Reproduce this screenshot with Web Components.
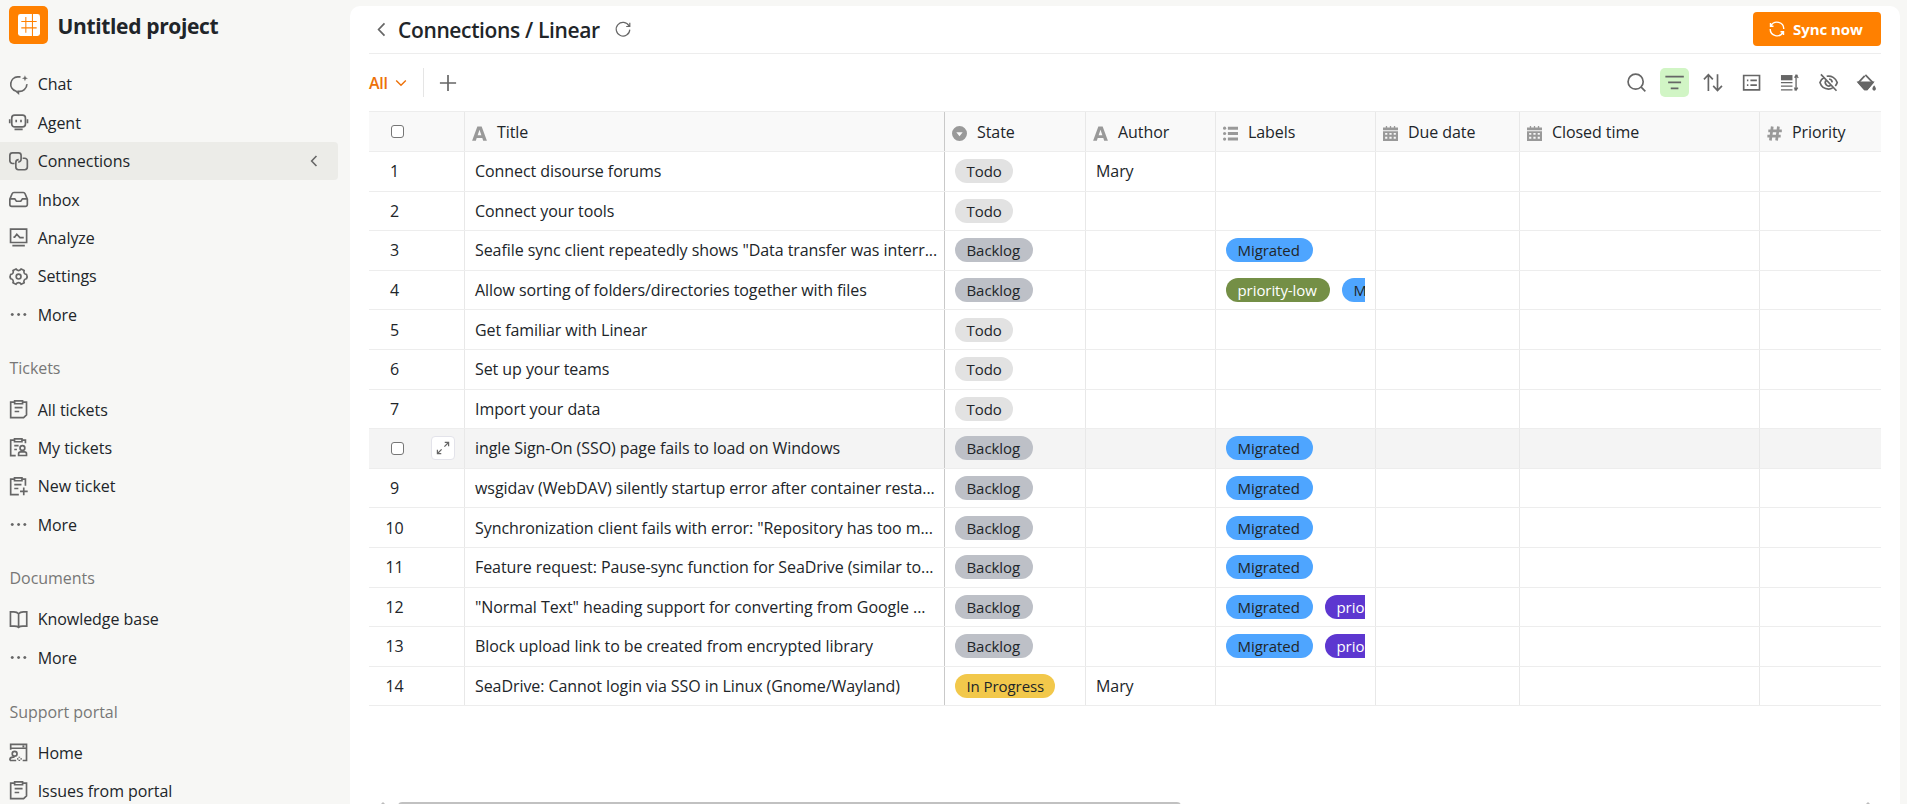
<!DOCTYPE html>
<html lang="en">
<head>
<meta charset="utf-8">
<title>Untitled project</title>
<style>
	html, body {
		margin: 0;
		height: 100%;
		overflow: hidden;
	}
	body {
		background: #f7f7f5;
		color: #212529;
		font: 16px/24px "Open Sans", "Noto Sans", sans-serif;
		letter-spacing: -0.07px;
	}
</style>
</head>
<body>
<project-app></project-app>

<script>
// Line icons are stroked, the ones in SOLID are filled
const ICONS = {
	chat: '<path d="M9.6 1.6H7.2A6 6 0 0 0 5.6 13.3L7.8 15.2V13.6A6 6 0 0 0 14.9 7.6"/><path d="M13.3.2 14 2 15.8 2.7 14 3.4 13.3 5.2 12.6 3.4 10.8 2.7 12.6 2Z" fill="currentColor" stroke="none"/>',
	agent: '<rect x="2.3" y="1.8" width="11.4" height="9.8" rx="2.4"/><path d="M.6 5.2v3.4M15.4 5.2v3.4M6 5.6v2.2M10 5.6v2.2M4.6 13.7h6.8"/>',
	connections: '<path d="M4.6 9.6H2.9A2.2 2.2 0 0 1 .7 7.4V3A2.2 2.2 0 0 1 2.9.8h5A2.2 2.2 0 0 1 10.1 3v2.9A2.4 2.4 0 0 1 7.7 8.4"/><path d="M11.4 5.2h1.7a2.2 2.2 0 0 1 2.2 2.2v5.2a2.2 2.2 0 0 1-2.2 2.2H7.9a2.2 2.2 0 0 1-2.2-2.2V8.7a2.4 2.4 0 0 1 2.4-2.4"/>',
	inbox: '<path d="M.7 7.6 2.6 3.1a1.6 1.6 0 0 1 1.5-1h7.8a1.6 1.6 0 0 1 1.5 1l1.9 4.5v4.5a1.6 1.6 0 0 1-1.6 1.6H2.3a1.6 1.6 0 0 1-1.6-1.6ZM.9 7.4h3.9l1.4 2h3.6l1.4-2h3.9"/>',
	analyze: '<path d="M1.3 1h13.4v11.1H1.3zM2.8 14.7h10.4M3.7 7.6h1l1.8-2.4 2.6 2.8h3.2"/>',
	settings: '<path d="M5.9 1.6a2.3 2.3 0 0 0 4.2 0l2.6 1.3a2.2 2.2 0 0 0 1.9 3.3q1 1.8 0 3.6a2.2 2.2 0 0 0-1.9 3.3l-2.6 1.3a2.3 2.3 0 0 0-4.2 0l-2.6-1.3a2.2 2.2 0 0 0-1.9-3.3q-1-1.8 0-3.6a2.2 2.2 0 0 0 1.9-3.3Z" stroke-linejoin="round"/><circle cx="8" cy="8" r="2"/>',
	more: '<g fill="currentColor" stroke="none"><circle cx="2.7" cy="8" r="1.25"/><circle cx="8" cy="8" r="1.25"/><circle cx="13.2" cy="8" r="1.25"/></g>',
	ticket: '<path d="M4.6 1.8H1.4v12.9h10.8l2.4-2.2V1.8h-3.2M4.7.8h6.6v2.3H4.7zM4.7 6.4h6.6M4.7 9.6h3.8"/>',
	myticket: '<path d="M4.2 1.8H1.4v12.9h4.2M11 1.8h2.7v2.6M4.6.8h6.2v2.3H4.6zM4.4 6.4H8M4.4 9.6h2.2"/><circle cx="11.2" cy="8.3" r="2"/><path d="M8 14.6v-1.4c0-1 .9-1.6 1.8-1.6h3c.9 0 1.8.6 1.8 1.6v1.4Z"/>',
	newticket: '<path d="M4.2 1.8H1.4v12.9h6.8M11 1.8h2.7v5.6M4.6.8h6.2v2.3H4.6zM4.4 6.4h6M4.4 9.6h3.4M12.3 8.8v6.4M9.2 12h6.4"/>',
	book: '<path d="M8 3.2C7 1.9 5.6 1.5 4 1.5H1.2v12H4.4c1.5 0 2.8.2 3.6 1 .8-.8 2.1-1 3.6-1h3.2v-12H12c-1.6 0-3 .4-4 1.7ZM8 3.2v11.3"/>',
	portal: '<path d="M1.4 5.6V1.2h13.2v13.4h-3.2M1.4 4.4h13.2M11.2 2.8h1.6"/><circle cx="4.7" cy="9" r="2"/><path d="M.8 14.6v-.8c0-1.2 1.3-2 2.6-2h1.2M6 14.6H.8M8.6 11.4v1M8.6 14v1M6.8 13.2h1M9.6 13.2h1"/>',
	left: '<path d="M10.8 2.3 5.3 8l5.5 5.7"/>',
	down: '<path d="M2.5 5.2 8 10.6l5.5-5.4"/>',
	plus: '<path d="M8 .8v14.4M.8 8h14.4"/>',
	refresh: '<path d="M14 5A6.8 6.8 0 1 0 14.8 8.6M14.8 1.8v3.7h-3.6"/>',
	sync: '<path d="M2 4.8A6.8 6.8 0 0 1 14.8 8M14 11.2A6.8 6.8 0 0 1 1.2 8M1.5 2v3.2h3M14.5 14v-3.2h-3"/>',
	search: '<circle cx="7.2" cy="7.2" r="6.3"/><path d="m11.8 11.8 3.5 3.5"/>',
	filter: '<path d="M.3 3h15.4M2.6 7.8h10.8M4.8 12.8h6.4"/>',
	sort: '<path d="M4.5 15V1.6M.8 5.3l3.7-3.9 3.7 3.9M12.1 1v13.4M8.5 10.7l3.6 3.9 3.7-3.9"/>',
	group: '<path d="M1.4 2.1h13.2v12H1.4zM4.1 6.1h1.2M7 6.1h5.4M4.1 10.1h1.2M7 10.1h5.4"/>',
	rowheight: '<path d="M.8 1.7h9.6v4.4H.8z" fill="currentColor" stroke="none"/><path d="M.8 8h9.6M.8 11h9.6M.8 14h9.6M13.4 2v12M12 14h1.4M13.4 2h1.4M12.2 4 13.4 1.8 15.2 4M12 12.2l1.4 2 1.4-2" stroke-width="1.1"/>',
	hide: '<path d="M4.2 3.8C2.5 4.8 1.3 6.3.8 8c1 3.2 3.9 5.4 7.2 5.4 1.2 0 2.3-.3 3.3-.8M6.4 2.7A7.6 7.6 0 0 1 15.2 8c-.3 1-.9 2-1.6 2.8M5.6 6.4a3 3 0 0 0 4 4.1M8.4 5a3 3 0 0 1 2.6 2.8M1.6 1.2l13 13.6"/>',
	paint: '<path d="M6.4 2.4 1.2 8l5.2 5.6h1.9L13.2 8 7 1.6"/><path d="M1.2 7.8h12L8.3 13.6H6.4Z" fill="currentColor"/><path d="M14.3 10.2s1.5 2 1.5 3a1.5 1.5 0 0 1-3 0c0-1 1.5-3 1.5-3Z" fill="currentColor" stroke="none"/>',
	expand: '<path d="M9.6 6.4 14 2M10 1.6h4.4V6M6.4 9.6 2 14M1.6 10v4.4H6"/>',
	logo: '<rect width="16" height="16" rx="1.8" fill="#fff" stroke="none"/><path d="M5.7 2.2v11.4M10.5 0v16M2.4 5.5h11.2M2.4 10.1h11.2" stroke="#ff8000" stroke-width=".75"/>'
};

const SOLID = {
	text: '<path fill-rule="evenodd" d="M5.7.6h4.6l5.6 15h-4l-.9-2.7H5l-.9 2.7H.1ZM6 9.8h4L8 4Z"/>',
	select: '<path fill-rule="evenodd" d="M8 0a8 8 0 1 1 0 16A8 8 0 0 1 8 0ZM4.6 6.6 8 11l3.4-4.4Z"/>',
	list: '<circle cx="1.7" cy="2.3" r="1.7"/><circle cx="1.7" cy="8" r="1.7"/><circle cx="1.7" cy="13.9" r="1.7"/><path d="M5.2.7H16v3.3H5.2zM5.2 6.4H16v3.3H5.2zM5.2 12.2H16v3.3H5.2z"/>',
	date: '<path d="M3 0h1.4v1.5h2.9V0h1.4v1.5h2.9V0H13v1.5h3v3H0v-3h3z"/><path fill-rule="evenodd" d="M0 5.6h16V16H0ZM2.3 7.5v1.8h2.3V7.5ZM6.8 7.5v1.8h2.4V7.5ZM11.4 7.5v1.8h2.3V7.5ZM2.3 11.4v2.2h2.3v-2.2ZM6.8 11.4v2.2h2.4v-2.2ZM11.4 11.4v2.2h2.3v-2.2Z"/>',
	number: '<path d="M5.6.5 3.6 15.5M12.2.5l-2 15M1.4 5.2h14.4M.4 10.9h14.2" fill="none" stroke="currentColor" stroke-width="2.9"/>'
};

class UiIcon extends HTMLElement {
	connectedCallback() {
		const name = this.getAttribute('name');
		const size = this.getAttribute('size') || 19.2;
		const weight = this.getAttribute('weight') || 1.4;
		const paint = SOLID[name]
			? 'fill="currentColor"'
			: `fill="none" stroke="currentColor" stroke-width="${weight}"`;
		this.attachShadow({ mode: 'open' }).innerHTML = `
			<style>
			:host { display: block; flex: none; width: ${size}px; height: ${size}px; }
			svg { display: block; overflow: visible; }
			</style>
			<svg width="${size}" height="${size}" viewBox="0 0 16 16" ${paint}>${SOLID[name] || ICONS[name]}</svg>
		`;
	}
}
customElements.define('ui-icon', UiIcon);

class NavItem extends HTMLElement {
	connectedCallback() {
		this.attachShadow({ mode: 'open' }).innerHTML = `
			<style>
			:host {
				display: flex;
				align-items: center;
				box-sizing: border-box;
				width: 338px;
				height: 38.4px;
				padding: 0 17px 0 9px;
				border-radius: 0 4px 4px 0;
			}
			:host([active]) { background: #ecece8; }
			ui-icon { color: #666; }
			span { flex: 1; margin-left: 9.5px; white-space: nowrap; }
			</style>
			<ui-icon name="${this.getAttribute('icon')}"></ui-icon>
			<span><slot></slot></span>
			${this.hasAttribute('active') ? '<ui-icon name="left" size="14" weight="1.8"></ui-icon>' : ''}
		`;
	}
}
customElements.define('nav-item', NavItem);

class NavGroup extends HTMLElement {
	connectedCallback() {
		const label = this.getAttribute('label');
		this.attachShadow({ mode: 'open' }).innerHTML = `
			<style>
			:host { display: block; }
			h2 {
				box-sizing: border-box;
				height: 56.4px;
				margin: 0;
				padding: 22.5px 0 0 9.5px;
				color: #777;
				font: inherit;
			}
			</style>
			${label ? `<h2>${label}</h2>` : ''}
			<slot></slot>
		`;
	}
}
customElements.define('nav-group', NavGroup);

class SideBar extends HTMLElement {
	connectedCallback() {
		this.attachShadow({ mode: 'open' }).innerHTML = `
			<style>
			:host { display: block; width: 350px; flex: none; letter-spacing: -0.04px; }
			header { display: flex; height: 59.2px; padding: 6px 0 0 9px; }
			.logo {
				display: grid;
				place-items: center;
				width: 39px;
				height: 38px;
				border-radius: 5px;
				background: #ff8000;
			}
			h1 { margin: 0 0 0 9.5px; font-size: 21px; line-height: 41px; font-weight: 700; letter-spacing: -0.35px; }
			</style>
			<header>
				<div class="logo"><ui-icon name="logo" size="22"></ui-icon></div>
				<h1>Untitled project</h1>
			</header>
			<nav-group>
				<nav-item icon="chat">Chat</nav-item>
				<nav-item icon="agent">Agent</nav-item>
				<nav-item icon="connections" active>Connections</nav-item>
				<nav-item icon="inbox">Inbox</nav-item>
				<nav-item icon="analyze">Analyze</nav-item>
				<nav-item icon="settings">Settings</nav-item>
				<nav-item icon="more">More</nav-item>
			</nav-group>
			<nav-group label="Tickets">
				<nav-item icon="ticket">All tickets</nav-item>
				<nav-item icon="myticket">My tickets</nav-item>
				<nav-item icon="newticket">New ticket</nav-item>
				<nav-item icon="more">More</nav-item>
			</nav-group>
			<nav-group label="Documents">
				<nav-item icon="book">Knowledge base</nav-item>
				<nav-item icon="more">More</nav-item>
			</nav-group>
			<nav-group label="Support portal">
				<nav-item icon="portal">Home</nav-item>
				<nav-item icon="ticket">Issues from portal</nav-item>
			</nav-group>
		`;
	}
}
customElements.define('side-bar', SideBar);

// Background, text colour and width of each select option
const OPTIONS = {
	'Todo': ['#e2e2e2', '#212529', 58],
	'Backlog': ['#bdc0c7', '#212529', 78],
	'In Progress': ['#f2c84b', '#212529', 100],
	'Migrated': ['#4ea5ff', '#212529', 87],
	'priority-low': ['#748f46', '#fff', 104],
	'priority-high': ['#5d37d0', '#fff', 110]
};

class OptionTag extends HTMLElement {
	connectedCallback() {
		const [back, color, width] = OPTIONS[this.textContent];
		this.attachShadow({ mode: 'open' }).innerHTML = `
			<style>
			:host {
				flex: none;
				box-sizing: border-box;
				display: block;
				width: ${width}px;
				height: 24px;
				padding-left: 11.5px;
				border-radius: 12px;
				background: ${back};
				color: ${color};
				font-size: 15px;
				line-height: 24px;
				white-space: nowrap;
			}
			</style>
			<slot></slot>
		`;
	}
}
customElements.define('option-tag', OptionTag);

const COLUMNS = [
	['text', 'Title'],
	['select', 'State'],
	['text', 'Author'],
	['list', 'Labels'],
	['date', 'Due date'],
	['date', 'Closed time'],
	['number', 'Priority']
];

const ROWS = [
	['Connect disourse forums', 'Todo', 'Mary', []],
	['Connect your tools', 'Todo', '', []],
	['Seafile sync client repeatedly shows "Data transfer was interr...', 'Backlog', '', ['Migrated']],
	['Allow sorting of folders/directories together with files', 'Backlog', '', ['priority-low', 'Migrated']],
	['Get familiar with Linear', 'Todo', '', []],
	['Set up your teams', 'Todo', '', []],
	['Import your data', 'Todo', '', []],
	['ingle Sign-On (SSO) page fails to load on Windows', 'Backlog', '', ['Migrated']],
	['wsgidav (WebDAV) silently startup error after container resta...', 'Backlog', '', ['Migrated']],
	['Synchronization client fails with error: "Repository has too m...', 'Backlog', '', ['Migrated']],
	['Feature request: Pause-sync function for SeaDrive (similar to...', 'Backlog', '', ['Migrated']],
	['"Normal Text" heading support for converting from Google ...', 'Backlog', '', ['Migrated', 'priority-high']],
	['Block upload link to be created from encrypted library', 'Backlog', '', ['Migrated', 'priority-high']],
	['SeaDrive: Cannot login via SSO in Linux (Gnome/Wayland)', 'In Progress', 'Mary', []]
];
const HOVERED = 7;

class DataGrid extends HTMLElement {
	connectedCallback() {
		this.attachShadow({ mode: 'open' }).innerHTML = `
			<style>
			:host { display: block; }
			.row {
				display: grid;
				grid-template-columns: 96px 480px 141px 130px 160px 144px 240px 121px;
				box-sizing: border-box;
				height: 39.6px;
				border-bottom: 1px solid #ededed;
			}
			.row.head { height: 41px; background: #f9f9f9; border-top: 1px solid #ededed; }
			.row.hover { background: #f4f4f4; }
			.cell {
				display: flex;
				align-items: center;
				min-width: 0;
				overflow: hidden;
				border-right: 1px solid #e8e8e8;
				white-space: nowrap;
				padding: 0 10px;
			}
			.cell:nth-child(2) { border-right-color: #c9c9c9; }
			.cell:last-child { border-right: 0; }
			.head .cell { padding: 0 0 0 6.5px; gap: 10.5px; }
			.head ui-icon { color: #999; margin-top: 4px; }
			.row .cell.index { padding: 0 9px 0 22px; justify-content: space-between; }
			.num { width: 30px; margin-left: -11.5px; text-align: center; }
			.check {
				box-sizing: border-box;
				width: 13px;
				height: 13px;
				border: 1.4px solid #767676;
				border-radius: 3px;
				background: #fff;
			}
			.open {
				display: grid;
				place-items: center;
				box-sizing: border-box;
				width: 24px;
				height: 24px;
				border: 1px solid #e3e3ea;
				border-radius: 4px;
				background: #fff;
				color: #666;
			}
			.tags { display: flex; gap: 12px; overflow: hidden; }
			</style>
			<div class="row head">
				<div class="cell index"><i class="check"></i></div>
				${COLUMNS.map(([icon, name]) => `<div class="cell"><ui-icon name="${icon}" size="15"></ui-icon>${name}</div>`).join('')}
			</div>
			${ROWS.map((row, i) => this.renderRow(row, i)).join('')}
		`;
	}

	renderRow([title, state, author, labels], i) {
		const index = i === HOVERED
			? '<div class="cell index"><i class="check"></i><div class="open"><ui-icon name="expand" size="14"></ui-icon></div></div>'
			: `<div class="cell index"><span class="num">${i + 1}</span></div>`;
		return `
			<div class="row ${i === HOVERED ? 'hover' : ''}">
				${index}
				<div class="cell">${title}</div>
				<div class="cell"><option-tag>${state}</option-tag></div>
				<div class="cell">${author}</div>
				<div class="cell"><div class="tags">${labels.map(l => `<option-tag>${l}</option-tag>`).join('')}</div></div>
				<div class="cell"></div>
				<div class="cell"></div>
				<div class="cell"></div>
			</div>
		`;
	}
}
customElements.define('data-grid', DataGrid);

class ViewToolbar extends HTMLElement {
	connectedCallback() {
		const tools = ['search', 'filter', 'sort', 'group', 'rowheight', 'hide', 'paint'];
		this.attachShadow({ mode: 'open' }).innerHTML = `
			<style>
			:host { display: flex; align-items: center; height: 57px; color: #666; }
			.view { display: flex; align-items: center; gap: 6px; color: #ed7109; font-weight: 600; letter-spacing: -0.3px; }
			.line { width: 1px; height: 29px; margin: 0 15px; background: #e5e5e5; }
			.tools { display: flex; gap: 9.6px; margin-left: auto; }
			.tool {
				display: grid;
				place-items: center;
				width: 28.8px;
				height: 28.8px;
				border-radius: 5px;
			}
			.tool.filter { background: #d1f5c5; }
			</style>
			<div class="view">All<ui-icon name="down" size="14" weight="1.6"></ui-icon></div>
			<div class="line"></div>
			<ui-icon name="plus" weight="1.5" size="18"></ui-icon>
			<div class="tools">
				${tools.map(t => `<div class="tool ${t}"><ui-icon name="${t}"></ui-icon></div>`).join('')}
			</div>
		`;
	}
}
customElements.define('view-toolbar', ViewToolbar);

class ProjectApp extends HTMLElement {
	connectedCallback() {
		this.attachShadow({ mode: 'open' }).innerHTML = `
			<style>
			:host { display: flex; height: 804px; overflow: hidden; }
			main {
				display: flex;
				flex-direction: column;
				box-sizing: border-box;
				width: 1550px;
				height: 798px;
				margin-top: 6px;
				padding: 0 19px;
				border-radius: 10px 10px 0 0;
				background: #fff;
			}
			header {
				display: flex;
				align-items: center;
				box-sizing: border-box;
				height: 48px;
				padding: 0 0 1px 4px;
				border-bottom: 1px solid #ededed;
				color: #666;
			}
			h1 { margin: 2px 15px 0 8px; color: #212529; font-size: 21px; line-height: 28px; font-weight: 600; letter-spacing: -0.36px; }
			button {
				display: flex;
				align-items: center;
				gap: 8px;
				width: 128px;
				height: 34px;
				margin: 0 0 0 auto;
				padding: 0 0 0 16px;
				border: 0;
				border-radius: 4px;
				background: #ff8000;
				color: #fff;
				font: inherit;
				font-size: 15px;
				font-weight: 700;
				letter-spacing: -0.05px;
				white-space: nowrap;
			}
			.scroll { display: flex; align-items: flex-start; height: 2px; margin-top: auto; overflow: hidden; }
			.arrow { width: 0; border: 4px solid transparent; border-top: 0; border-bottom: 4px solid #bbb; margin-left: 10px; }
			.thumb { width: 783px; height: 12px; margin-left: 11px; border-radius: 4px; background: #c1c1c1; }
			.arrow.end { margin: 0 9px 0 auto; }
			</style>
			<side-bar></side-bar>
			<main>
				<header>
					<ui-icon name="left" size="17" weight="1.6"></ui-icon>
					<h1>Connections / Linear</h1>
					<ui-icon name="refresh" size="16" weight="1.2"></ui-icon>
					<button><ui-icon name="sync" size="16"></ui-icon>Sync now</button>
				</header>
				<view-toolbar></view-toolbar>
				<data-grid></data-grid>
				<div class="scroll"><i class="arrow"></i><i class="thumb"></i><i class="arrow end"></i></div>
			</main>
		`;
	}
}
customElements.define('project-app', ProjectApp);
</script>
</body>
</html>
